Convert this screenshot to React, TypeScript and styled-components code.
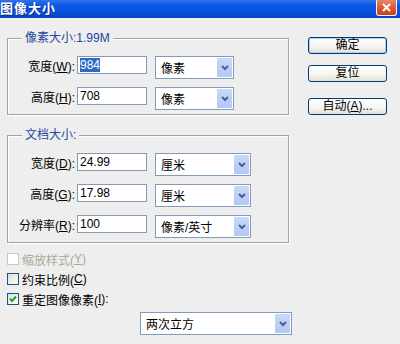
import React from "react";
import styled, { createGlobalStyle } from "styled-components";

const FONT = `"Liberation Sans", "Noto Sans CJK SC", sans-serif`;

const GlobalStyle = createGlobalStyle`
  html, body {
    margin: 0;
    padding: 0;
    background: #eeeeee;
  }
  body {
    font-family: ${FONT};
    font-size: 12px;
    color: #000;
  }
`;

const Window = styled.div`
  width: 400px;
  height: 344px;
  overflow: hidden;
  background: #eeeeee;
  display: flex;
  flex-direction: column;
`;

const TitleBar = styled.div`
  height: 18px;
  flex-shrink: 0;
  display: flex;
  justify-content: space-between;
  align-items: flex-start;
  background: linear-gradient(180deg, #3474ec 0%, #0c58e4 30%, #0a50da 70%, #0844c2 100%);
`;

const Title = styled.span`
  color: #fff;
  font-weight: bold;
  font-size: 13px;
  line-height: 17px;
  letter-spacing: 1px;
  text-shadow: 1px 1px 0 #0a2a8a;
`;

const CloseButton = styled.div`
  width: 21px;
  height: 16px;
  margin-right: 3px;
  box-sizing: border-box;
  border: 1px solid #f4f4f4;
  border-top: none;
  border-radius: 0 0 3px 3px;
  background: linear-gradient(180deg, #e9866a, #d8552e 60%, #c8431c);
  display: flex;
  align-items: center;
  justify-content: center;
`;

const Body = styled.div`
  display: flex;
  align-items: flex-start;
  padding-left: 7px;
`;

const Main = styled.div`
  width: 283px;
  display: flex;
  flex-direction: column;
`;

const Side = styled.div`
  width: 79px;
  margin-left: 18px;
  padding-top: 19px;
  display: flex;
  flex-direction: column;
`;

const Group = styled.fieldset<{ $top: number }>`
  margin: ${(p) => p.$top}px 0 0 0;
  padding: 11px 0 4px 0;
  width: 282px;
  box-sizing: border-box;
  min-inline-size: 0;
  border: 1px solid #a3a3a3;
  box-shadow: inset 1px 1px 0 #fff, 1px 1px 0 #fff;
`;

const Legend = styled.legend`
  margin-left: 14px;
  padding: 0 3px;
  color: #2446a0;
  font-size: 12px;
  line-height: 14px;
  background: #eeeeee;
`;

const FieldRow = styled.div`
  display: flex;
  align-items: flex-start;
  height: 23px;

  & + & {
    margin-top: 8px;
  }
`;

const FieldLabel = styled.span`
  width: 69px;
  box-sizing: border-box;
  padding-right: 2px;
  padding-top: 2px;
  text-align: right;
  line-height: 18px;
  white-space: nowrap;
`;

const TextBox = styled.div`
  width: 70px;
  height: 18px;
  margin-right: 8px;
  box-sizing: border-box;
  border: 1px solid #7f9db9;
  background: #fff;
  padding: 0 2px;
  line-height: 16px;
  white-space: nowrap;
`;

const Selected = styled.span`
  background: #316ac5;
  color: #fff;
`;

const SelectBox = styled.div<{ $width: number }>`
  width: ${(p) => p.$width}px;
  height: 23px;
  box-sizing: border-box;
  border: 1px solid #7f9db9;
  background: #fff;
  display: flex;
  align-items: center;
  justify-content: space-between;
`;

const SelectText = styled.span`
  padding-left: 5px;
  white-space: nowrap;
`;

const ArrowBox = styled.span`
  width: 15px;
  height: 19px;
  margin-right: 1px;
  border-radius: 1px;
  background: linear-gradient(180deg, #c9d8fa, #b2c7f4);
  display: flex;
  align-items: center;
  justify-content: center;
`;

const CheckList = styled.div`
  margin-top: 6px;
  display: flex;
  flex-direction: column;
`;

const CheckRow = styled.div<{ $disabled?: boolean }>`
  height: 20px;
  display: flex;
  align-items: center;
  color: ${(p) => (p.$disabled ? "#aca899" : "#000")};
`;

const Box = styled.span<{ $disabled?: boolean }>`
  width: 12px;
  height: 12px;
  margin-right: 3px;
  box-sizing: border-box;
  border: 1px solid ${(p) => (p.$disabled ? "#cac8bb" : "#1c5180")};
  background: ${(p) => (p.$disabled ? "#fff" : "linear-gradient(135deg, #dcdcd7, #fff)")};
  display: flex;
  align-items: center;
  justify-content: center;
`;

const BottomRow = styled.div`
  margin-top: 3px;
  padding-left: 133px;
`;

const Button = styled.div<{ $space: number; $default?: boolean }>`
  height: 17px;
  margin-top: ${(p) => p.$space}px;
  box-sizing: border-box;
  border: 1px solid #003c74;
  border-radius: 3px;
  background: linear-gradient(180deg, #ffffff, #f4f4f0 60%, #e2e0d8);
  display: flex;
  align-items: center;
  justify-content: center;
  line-height: 15px;
  white-space: nowrap;
  box-shadow: ${(p) => (p.$default ? "inset 0 0 0 1px #b2cdf5" : "none")};
`;

const Chevron = () => (
  <svg width="8" height="6" viewBox="0 0 8 6">
    <polyline points="1,1 4,4 7,1" fill="none" stroke="#4a5e96" strokeWidth="2" />
  </svg>
);

const Select = ({ width, value }: { width: number; value: string }) => (
  <SelectBox $width={width}>
    <SelectText>{value}</SelectText>
    <ArrowBox>
      <Chevron />
    </ArrowBox>
  </SelectBox>
);

const App = () => {
  return (
    <Window>
      <GlobalStyle />
      <TitleBar>
        <Title>图像大小</Title>
        <CloseButton>
          <svg width="11" height="11" viewBox="0 0 11 11">
            <path d="M2 2 L9 9 M9 2 L2 9" stroke="#fff" strokeWidth="2" />
          </svg>
        </CloseButton>
      </TitleBar>

      <Body>
        <Main>
          <Group $top={13}>
            <Legend>像素大小:1.99M</Legend>
            <FieldRow>
              <FieldLabel>
                宽度(<u>W</u>):
              </FieldLabel>
              <TextBox>
                <Selected>984</Selected>
              </TextBox>
              <Select width={79} value="像素" />
            </FieldRow>
            <FieldRow>
              <FieldLabel>
                高度(<u>H</u>):
              </FieldLabel>
              <TextBox>708</TextBox>
              <Select width={79} value="像素" />
            </FieldRow>
          </Group>

          <Group $top={13}>
            <Legend>文档大小:</Legend>
            <FieldRow>
              <FieldLabel>
                宽度(<u>D</u>):
              </FieldLabel>
              <TextBox>24.99</TextBox>
              <Select width={96} value="厘米" />
            </FieldRow>
            <FieldRow>
              <FieldLabel>
                高度(<u>G</u>):
              </FieldLabel>
              <TextBox>17.98</TextBox>
              <Select width={96} value="厘米" />
            </FieldRow>
            <FieldRow>
              <FieldLabel>
                分辨率(<u>R</u>):
              </FieldLabel>
              <TextBox>100</TextBox>
              <Select width={96} value="像素/英寸" />
            </FieldRow>
          </Group>

          <CheckList>
            <CheckRow $disabled>
              <Box $disabled />
              缩放样式(<u>Y</u>)
            </CheckRow>
            <CheckRow>
              <Box />
              约束比例(<u>C</u>)
            </CheckRow>
            <CheckRow>
              <Box>
                <svg width="8" height="8" viewBox="0 0 8 8">
                  <polyline points="1,3.5 3,6 7,1.5" fill="none" stroke="#21a121" strokeWidth="2" />
                </svg>
              </Box>
              重定图像像素(<u>I</u>):
            </CheckRow>
          </CheckList>

          <BottomRow>
            <Select width={152} value="两次立方" />
          </BottomRow>
        </Main>

        <Side>
          <Button $space={0} $default>
            确定
          </Button>
          <Button $space={11}>复位</Button>
          <Button $space={16}>
            自动(<u>A</u>)...
          </Button>
        </Side>
      </Body>
    </Window>
  );
};

export default App;
